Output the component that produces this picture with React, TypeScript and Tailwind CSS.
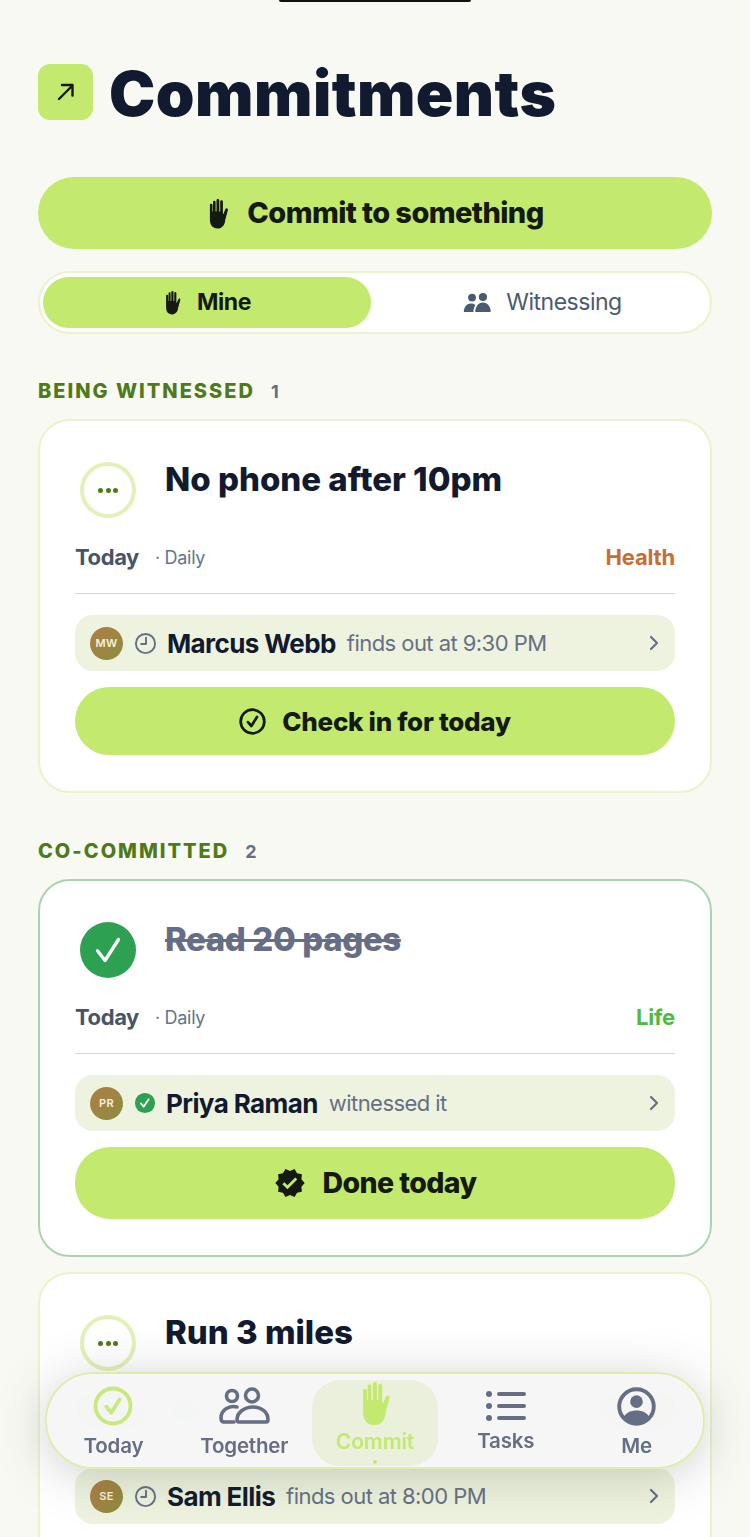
import { ChevronRight } from "lucide-react";
import { MdVerified } from "react-icons/md";

const HandIcon = ({ className }: { className: string }) => (
  <svg viewBox="0 0 24 30" className={className} fill="currentColor">
    <path d="M7 3.500a1.300 1.300 0 0 1 2.600 0V13h.9V2a1.400 1.400 0 0 1 2.800 0v11h.9V3.200a1.350 1.350 0 0 1 2.700 0V15l.5.4 1.800-4.300c.4-1 1.100-1.500 1.900-1.200.8.300 1 1.100.7 2.100l-2.600 9.400C19 26 16.300 30 11.500 30 6.500 30 3.900 26.500 3.900 21V6.500a1.300 1.300 0 0 1 2.600 0V13H7Z" />
  </svg>
);

const ClockIcon = () => (
  <svg viewBox="0 0 24 24" className="w-[23px] h-[23px] text-[#667085] shrink-0" fill="none" stroke="currentColor" strokeWidth="2" strokeLinecap="round" strokeLinejoin="round">
    <circle cx="12" cy="12" r="10" />
    <path d="M12.500 6v6.500H7.500" />
  </svg>
);

const CheckCircle = ({ className, sw = 2 }: { className: string; sw?: number }) => (
  <svg viewBox="0 0 24 24" className={className} fill="none" stroke="currentColor" strokeWidth={sw} strokeLinecap="round" strokeLinejoin="round">
    <circle cx="12" cy="12" r="10.500" />
    <path d="m8 12.500 3 3.500 5-8" />
  </svg>
);

const PairIcon = () => (
  <svg viewBox="0 0 30 22" className="w-[29px] h-[20px] text-[#4b5a70]" fill="currentColor">
    <circle cx="9" cy="5" r="4.300" />
    <circle cx="21" cy="4.500" r="4.500" />
    <path d="M0 21c0-6 3.500-9.500 8-9.500 2 0 3.500.6 4.800 1.700-1.500 2-2.300 4.600-2.300 7.800Z" />
    <path d="M12.500 21c0-6 3.500-10.500 8.500-10.500S29.500 15 29.500 21Z" />
  </svg>
);

const TogetherIcon = () => (
  <svg viewBox="0 0 52 38" className="w-[52px] h-[38px] text-[#666e85]" fill="none" stroke="currentColor" strokeWidth="3.600" strokeLinecap="round" strokeLinejoin="round">
    <circle cx="14" cy="9" r="5.500" />
    <circle cx="34" cy="8.500" r="6.500" />
    <path d="M19 20c-8-2-16 3-16 11 0 2.500 1 4 3 4h10" />
    <path d="M21 35h27c1.500 0 2-1 2-2.500C50 25 43 20 35 20s-16 5-16 12.500c0 1.500.5 2.500 2 2.500Z" />
  </svg>
);

const TasksIcon = () => (
  <svg viewBox="0 0 40 30" className="w-[40px] h-[30px] text-[#666e85]" fill="currentColor">
    <circle cx="3" cy="3" r="3" />
    <circle cx="3" cy="15" r="3" />
    <circle cx="3" cy="27" r="3" />
    <rect x="11" y="1" width="29" height="4" rx="2" />
    <rect x="11" y="13" width="29" height="4" rx="2" />
    <rect x="11" y="25" width="29" height="4" rx="2" />
  </svg>
);

const MeIcon = () => (
  <svg viewBox="0 0 40 40" className="w-[39px] h-[39px] text-[#666e85]" fill="none">
    <circle cx="20" cy="20" r="17.700" stroke="currentColor" strokeWidth="4" />
    <circle cx="20" cy="15" r="6.500" fill="currentColor" />
    <path d="M6.500 31c3-5 8-7 13.500-7s10.500 2 13.500 7c-3.500 4-8 6-13.500 6s-10-2-13.500-6Z" fill="currentColor" />
  </svg>
);

type CommitmentProps = {
  title: string;
  done?: boolean;
  tag: string;
  tagColor: string;
  initials: string;
  person: string;
  note: string;
  action?: string;
};

const Commitment = ({ title, done, tag, tagColor, initials, person, note, action }: CommitmentProps) => (
  <div className={`bg-white rounded-[32px] border-2 px-[35px] pt-[41px] pb-[36px] ${done ? "border-[#a9d5ae]" : "border-[#e9f4cd]"}`}>
    <div className="flex items-start pl-[5px] gap-[29px] h-[56px]">
      {done ? (
        <div className="w-[56px] h-[56px] rounded-full bg-[#2ea052] flex items-center justify-center shrink-0">
          <svg viewBox="0 0 24 24" className="w-[36px] h-[36px] text-white" fill="none" stroke="currentColor" strokeWidth="2.200" strokeLinecap="round" strokeLinejoin="round">
            <path d="m5 12.500 5 6.500 9-14" />
          </svg>
        </div>
      ) : (
        <div className="w-[56px] h-[56px] rounded-full border-[4px] border-[#e3f1b9] flex items-center justify-center gap-[2.500px] shrink-0">
          <span className="w-[5px] h-[5px] rounded-full bg-[#4d7b13]" />
          <span className="w-[5px] h-[5px] rounded-full bg-[#4d7b13]" />
          <span className="w-[5px] h-[5px] rounded-full bg-[#4d7b13]" />
        </div>
      )}
      <h2 className={`text-[33px] leading-[34px] font-extrabold ${done ? "tracking-[-0.4px] text-[#666e85] line-through" : "tracking-[0px] text-[#111a2e]"}`}>{title}</h2>
    </div>
    <div className="flex items-center justify-between mt-[25px] h-[28px]">
      <div className="flex items-center">
        <span className="text-[22px] font-bold tracking-[-0.4px] text-[#475569]">Today</span>
        <span className="ml-[16px] text-[18px] text-[#64748b] tracking-[-0.3px]">· Daily</span>
      </div>
      <span className={`text-[22px] font-bold tracking-[-0.2px] ${tagColor}`}>{tag}</span>
    </div>
    <div className="h-[1px] bg-[#d5d7d8] mt-[22px]" />
    <div className="flex items-center h-[56px] mt-[21px] rounded-[18px] bg-[#eef3df] pl-[15px] pr-[9px]">
      <div className="w-[33px] h-[33px] rounded-full bg-gradient-to-br from-[#b07c43] to-[#8b8d3f] flex items-center justify-center text-[11px] font-semibold text-[#f4f1e0] tracking-[0.4px] shrink-0">{initials}</div>
      <div className="ml-[11px] shrink-0 flex">
        {done ? (
          <svg viewBox="0 0 24 24" className="w-[22px] h-[22px]" fill="none">
            <circle cx="12" cy="12" r="11" fill="#2ea052" />
            <path d="m7.500 12.500 3 3.500 5.500-8" stroke="white" strokeWidth="2" strokeLinecap="round" strokeLinejoin="round" />
          </svg>
        ) : (
          <ClockIcon />
        )}
      </div>
      <span className="ml-[10px] text-[26px] font-bold tracking-[-0.6px] text-[#111a2e]">{person}</span>
      <span className="ml-[11px] text-[22px] tracking-[-0.55px] text-[#667085]">{note}</span>
      <ChevronRight className="ml-auto w-[24px] h-[24px] text-[#667085]" strokeWidth={2.200} />
    </div>
    <button className={`w-full flex items-center justify-center rounded-[35px] bg-[#c3e96f] text-[#141a12] mt-[16px] font-extrabold ${done ? "h-[72px] gap-[17px] text-[28.5px] tracking-[-0.6px]" : "h-[68px] gap-[16px] text-[26px] tracking-[-0.3px]"}`}>
      {action && (done ? <MdVerified className="w-[32px] h-[32px]" /> : <CheckCircle className="w-[27px] h-[27px]" sw={2.400} />)}
      {action}
    </button>
  </div>
);

const SectionLabel = ({ label, count }: { label: string; count: number }) => (
  <div className="flex items-center gap-[16px] h-[24px]">
    <span className="text-[20px] font-extrabold tracking-[2px] text-[#4f7a1a]">{label}</span>
    <span className="text-[18px] font-bold text-[#667085]">{count}</span>
  </div>
);

const NavItem = ({ label, icon, labelClass = "mt-[8px]" }: { label: string; icon: React.ReactNode; labelClass?: string }) => (
  <div className="flex flex-col items-center">
    <div className="h-[38px] flex items-center">{icon}</div>
    <span className={`text-[20.500px] font-semibold tracking-[-0.2px] text-[#666e85] leading-[26px] ${labelClass}`}>{label}</span>
  </div>
);

export default function App() {
  return (
    <main className="relative w-[750px] h-[1537px] overflow-hidden bg-[#f7f9f2] font-['Inter',sans-serif]">
      <div className="absolute top-0 left-[279px] w-[192px] h-[2px] rounded-b-full bg-[#111]" />

      <div className="px-[38px] pt-[64px]">
        <header className="flex items-center gap-[16px]">
          <div className="w-[55px] h-[56px] rounded-[12px] bg-[#c3e96f] flex items-center justify-center">
            <svg viewBox="0 0 24 24" className="w-[24px] h-[24px] text-[#141a12]" fill="none" stroke="currentColor" strokeWidth="2.400" strokeLinecap="round" strokeLinejoin="round">
              <path d="M5 19 18 6M8 5h10.500v10.500" />
            </svg>
          </div>
          <h1 className="text-[62px] pt-[4px] leading-[52px] font-black tracking-[0.45px] text-[#111a2e]">Commitments</h1>
        </header>

        <button className="w-full h-[72px] mt-[57px] rounded-[36px] bg-[#c3e96f] flex items-center justify-center gap-[17px] text-[29px] font-extrabold tracking-[-0.6px] text-[#141a12]">
          <HandIcon className="w-[24px] h-[31px]" />
          Commit to something
        </button>

        <div className="flex h-[63px] mt-[22px] rounded-[32px] bg-white border-2 border-[#e9f4cd] py-[4px] pl-[3px] pr-[4px]">
          <div className="w-[328px] shrink-0 rounded-[26px] bg-[#c3e96f] flex items-center justify-center gap-[15px] text-[23px] font-bold tracking-[-0.4px] text-[#141a12]">
            <HandIcon className="w-[19px] h-[25px]" />
            Mine
          </div>
          <div className="flex-1 flex items-center justify-center gap-[14px] text-[23px] text-[#4b5a70] tracking-[-0.5px] pl-[8px]">
            <PairIcon />
            Witnessing
          </div>
        </div>

        <div className="mt-[45px]">
          <SectionLabel label="BEING WITNESSED" count={1} />
        </div>
        <div className="mt-[16px]">
          <Commitment title="No phone after 10pm" tag="Health" tagColor="text-[#c56f33]" initials="MW" person="Marcus Webb" note="finds out at 9:30 PM" action="Check in for today" />
        </div>

        <div className="mt-[46px]">
          <SectionLabel label="CO-COMMITTED" count={2} />
        </div>
        <div className="mt-[16px]">
          <Commitment title="Read 20 pages" done tag="Life" tagColor="text-[#4fbb3c]" initials="PR" person="Priya Raman" note="witnessed it" action="Done today" />
        </div>
        <div className="mt-[15px]">
          <Commitment title="Run 3 miles" tag="Health" tagColor="text-[#c56f33]" initials="SE" person="Sam Ellis" note="finds out at 8:00 PM" />
        </div>
      </div>

      <nav className="absolute left-[45px] top-[1372px] w-[660px] h-[97px] rounded-[48px] border-2 border-[#dcedad] bg-[#f4f6f4]/95 backdrop-blur-md shadow-[0_6px_50px_rgba(70,80,60,0.26)] grid grid-cols-5 items-start pt-[13px] px-[1px]">
        <NavItem label="Today" icon={<CheckCircle className="w-[40px] h-[40px] text-[#c8ea7d]" sw={2.300} />} />
        <NavItem label="Together" icon={<TogetherIcon />} />
        <div className="relative flex flex-col items-center">
          <div className="absolute -top-[7px] left-[2px] w-[126px] h-[86px] rounded-[28px] bg-[#eaf0dc]" />
          <div className="relative flex flex-col items-center -mt-[6px]">
            <HandIcon className="w-[36px] h-[44px] text-[#c3e96f]" />
            <span className="text-[21px] font-semibold tracking-[-0.1px] text-[#c3e96f] leading-[26px] mt-[4px]">Commit</span>
            <span className="w-[4px] h-[4px] rounded-full bg-[#c3e96f] mt-[5px]" />
          </div>
        </div>
        <NavItem label="Tasks" labelClass="mt-[3px]" icon={<TasksIcon />} />
        <NavItem label="Me" icon={<MeIcon />} />
      </nav>
    </main>
  );
}
